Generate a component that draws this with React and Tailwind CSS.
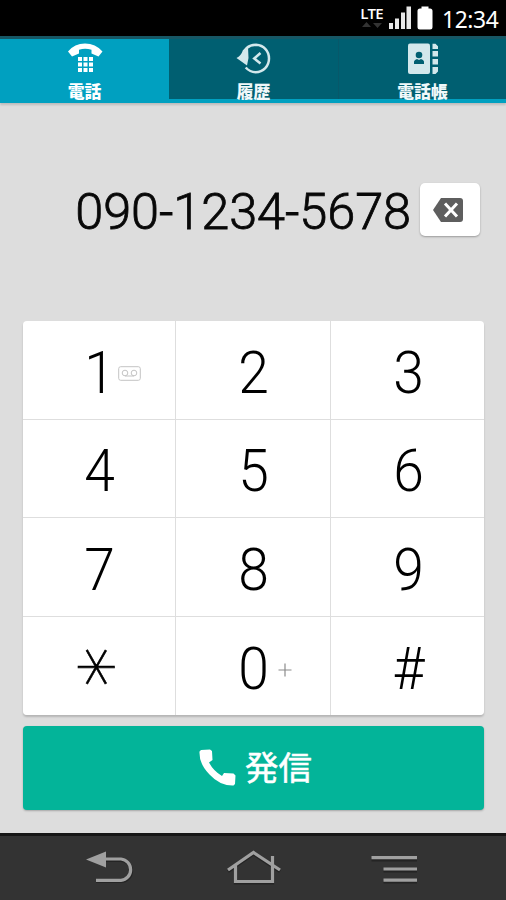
import React from "react";

const JP = "font-['Roboto','Noto_Sans_CJK_JP',sans-serif]";

function StatusBar() {
  return (
    <div className="flex h-9 shrink-0 items-start justify-end bg-black pr-2 text-white">
      <div className="flex w-[23px] flex-col items-center pt-[5px]">
        <span className="font-['Open_Sans',sans-serif] text-[15px] leading-[17px] font-semibold tracking-[-0.8px]">LTE</span>
        <svg width="22" height="6" viewBox="0 0 22 6" fill="#333">
          <path d="M1 5 5.500 0 10 5zM12 1h9l-4.500 5z" />
        </svg>
      </div>
      <svg width="24" height="25" viewBox="0 0 24 25" className="mt-[5px] ml-[5px]" fill="#e8e8e8">
        <path d="M1 18h4v6H1zM7 13.500h4V24H7zM13 7.500h4V24h-4zM18.500 1.500h4.500V24h-4.500z" />
      </svg>
      <svg width="16" height="25" viewBox="0 0 16 25" className="mt-[5px] ml-[5px]" fill="#fff">
        <path d="M4.500 1.500h7v2H13q2.500 0 2.500 2.500v16q0 2.500-2.500 2.500H3q-2.500 0-2.500-2.500V6Q.5 3.500 3 3.500h1.500z" />
      </svg>
      <span className="mt-[5px] ml-[9px] w-[56px] origin-left scale-x-[0.95] font-['Noto_Sans',sans-serif] text-[24px] leading-[27px] tracking-[-0.4px] whitespace-nowrap">12:34</span>
    </div>
  );
}

function DialIcon() {
  return (
    <svg width="38" height="32" viewBox="0 0 38 32" fill="#fff" className="shrink-0">
      <path d="M2 8.500Q8.500.5 19 .5T36.500 8.500L32.500 13.500 25.500 10.500V6.700Q19 4.800 13 6.700v3.800L6 13.500z" />
      {[14, 19.5, 25].map((y) =>
        [12, 17.5, 23].map((x) => <rect key={`${x}-${y}`} x={x} y={y} width="4" height="4" />)
      )}
    </svg>
  );
}

function HistoryIcon() {
  return (
    <svg width="38" height="32" viewBox="0 0 38 32" fill="none" stroke="#d3e8ec" className="shrink-0">
      <path d="M8.300 14Q9 2 21 1.800C29 2.300 34 8 34 15.500S28.500 29.200 20.500 29.200Q15 29.200 10.700 24.500" strokeWidth="2.500" />
      <path d="M1.500 15Q6 13 8 7L13 4 13.500 15 12 22.500z" fill="#d3e8ec" stroke="none" />
      <path d="M25.500 10 19.200 15.500 25.500 20.500" strokeWidth="2.500" />
    </svg>
  );
}

function ContactsIcon() {
  return (
    <svg width="38" height="32" viewBox="0 0 38 32" fill="#d3e8ec" className="shrink-0">
      <rect x="4" y=".5" width="22" height="30.500" rx="2" />
      <g fill="#005f71">
        <circle cx="15" cy="12" r="3.300" />
        <path d="M10 21v-2.500q.5-2 3-2.500l2 1 2-1q2.500.5 3 2.500V21z" />
      </g>
      <path d="M28.500.8h3l2.500 2.500V6h-5.500zM28.500 8H34v5.500h-5.500zM28.500 16H34v5.500h-5.500zM28.500 24H34v4.500L31.500 31h-3z" />
    </svg>
  );
}

const tabs = [
  { label: "電話", Icon: DialIcon, tone: "w-[169px] bg-[#00a0c0] text-white" },
  { label: "履歴", Icon: HistoryIcon, tone: "w-[169px] bg-[#005f71] text-[#f0f8fa]" },
  { label: "電話帳", Icon: ContactsIcon, tone: "w-[168px] border-l border-[#07586a] bg-[#005f71] text-[#f0f8fa]" },
];

function Tabs() {
  return (
    <nav className="z-10 flex h-[67px] shrink-0 border-t-[3px] border-b-[4px] border-t-[#175765] border-b-[#00a0c0] shadow-[0_2px_2px_rgba(0,0,0,0.15)]">
      {tabs.map(({ label, Icon, tone }) => (
        <button key={label} className={`flex h-[60px] flex-col items-center justify-start pt-1 ${tone}`}>
          <Icon />
          <span className={`mt-[7px] shrink-0 text-[16.8px] leading-[20px] font-black ${JP}`}>{label}</span>
        </button>
      ))}
    </nav>
  );
}

function NumberDisplay() {
  return (
    <div className="flex h-[218px] shrink-0 items-start justify-end pr-[26px]">
      <span className="mt-[79px] mr-[9px] font-['Roboto',sans-serif] text-[50.5px] leading-[60px] font-light tracking-[-0.1px] text-[#080808] [-webkit-text-stroke:0.8px_#080808]">
        090-1234-5678
      </span>
      <button aria-label="Backspace" className="mt-[80px] flex h-[53px] w-[60px] items-center justify-center rounded-[5px] bg-white pr-1 shadow-[0_1px_2px_rgba(0,0,0,0.3)]">
        <svg width="30" height="24" viewBox="0 0 30 24">
          <path d="M8 0H27q3 0 3 3V21q0 3-3 3H8L0 12z" fill="#5e5e5e" />
          <path d="M12 5.500 24 18.500M24 5.500 12 18.500" stroke="#fff" strokeWidth="3" />
        </svg>
      </button>
    </div>
  );
}

function VoicemailMark() {
  return (
    <svg width="23" height="15" viewBox="0 0 23 15" fill="none" stroke="#c4c4c4" className="absolute top-[44.500px] left-[95px]">
      <rect x=".7" y=".7" width="21.600" height="13.600" rx="2" />
      <circle cx="7" cy="7" r="2.800" />
      <circle cx="16" cy="7" r="2.800" />
      <path d="M7 10h9" />
    </svg>
  );
}

function PlusMark() {
  return (
    <svg width="14" height="14" viewBox="0 0 14 14" stroke="#8b8b8b" strokeWidth="1.200" className="absolute top-[46px] left-[102px]">
      <path d="M7 .5v13M.5 7h13" />
    </svg>
  );
}

const keys = ["1", "2", "3", "4", "5", "6", "7", "8", "9", "*", "0", "#"];

function Key({ label }) {
  const star = label === "*";
  return (
    <button className="relative flex items-center justify-center bg-white pt-[6px] pl-[2px] font-['Roboto',sans-serif] text-[60px] leading-none font-light text-black">
      {star ? (
        <span className="-mt-[3px] mr-[33px] block rotate-90 font-['DejaVu_Sans',sans-serif] text-[81px] leading-[72px] font-extralight [-webkit-text-stroke:0.6px_#000]">*</span>
      ) : (
        <span className="block scale-x-[0.92]">{label}</span>
      )}
      {label === "1" && <VoicemailMark />}
      {label === "0" && <PlusMark />}
    </button>
  );
}

function Keypad() {
  return (
    <div className="mr-[22px] ml-[23px] grid h-[393.500px] shrink-0 grid-cols-[152px_154px_153px] grid-rows-4 gap-px overflow-hidden rounded-[4px] bg-[#dedede] shadow-[0_2px_2px_rgba(0,0,0,0.18)]">
      {keys.map((k) => (
        <Key key={k} label={k} />
      ))}
    </div>
  );
}

function CallButton() {
  return (
    <button className={`mt-[11.5px] mr-[22px] ml-[23px] flex h-[83.5px] shrink-0 items-center justify-center gap-[9px] rounded-[4px] bg-[#03b499] pl-[4px] text-white shadow-[0_1px_2px_rgba(0,0,0,0.25)] ${JP}`}>
      <svg width="37" height="37" viewBox="0 0 37 37" fill="#fff">
        <path d="M.5 2.500 2 1 11 .5 13 2 13.500 11 10 13.500Q14.500 22 23 27l2-3 9.500.5 2 2-.5 8.500-1.500 1.500Q21 37 10.500 25.500 0 15 .5 2.500z" />
      </svg>
      <span className="mt-[3px] text-[33.500px] leading-[40px] font-normal [-webkit-text-stroke:0.5px_#fff]">発信</span>
    </button>
  );
}

function NavBar() {
  return (
    <div className="mt-auto flex h-[67px] shrink-0 items-start border-t-[3px] border-[#161616] bg-[#333]">
      <svg width="506" height="64" viewBox="0 0 506 64" fill="none" stroke="#a0a0a0" strokeWidth="3.200">
        <g stroke="#242424" transform="translate(0 2)">
          <path d="M104 22.500h17a10.500 10.500 0 0 1 0 21H96M228 33.500 253.500 16 280 33.500M235.500 28v17h37V20M371.500 22h45.500M383.500 33H417M383.500 44H417" />
        </g>
        <path d="M104 23h17a10.700 10.700 0 0 1 0 21.300H96" />
        <path d="M86 23.500 106 15.500v16z" fill="#a0a0a0" stroke="none" />
        <path d="M228 34 253.500 16.500 280 34M235.500 28.500v17h37V20" />
        <path d="M371.500 21.700h45.500M383.500 33H417M383.500 44.200H417" />
      </svg>
    </div>
  );
}

export default function App() {
  return (
    <div className="flex h-[900px] w-[506px] flex-col overflow-hidden bg-[#ddd]">
      <StatusBar />
      <Tabs />
      <NumberDisplay />
      <Keypad />
      <CallButton />
      <NavBar />
    </div>
  );
}
